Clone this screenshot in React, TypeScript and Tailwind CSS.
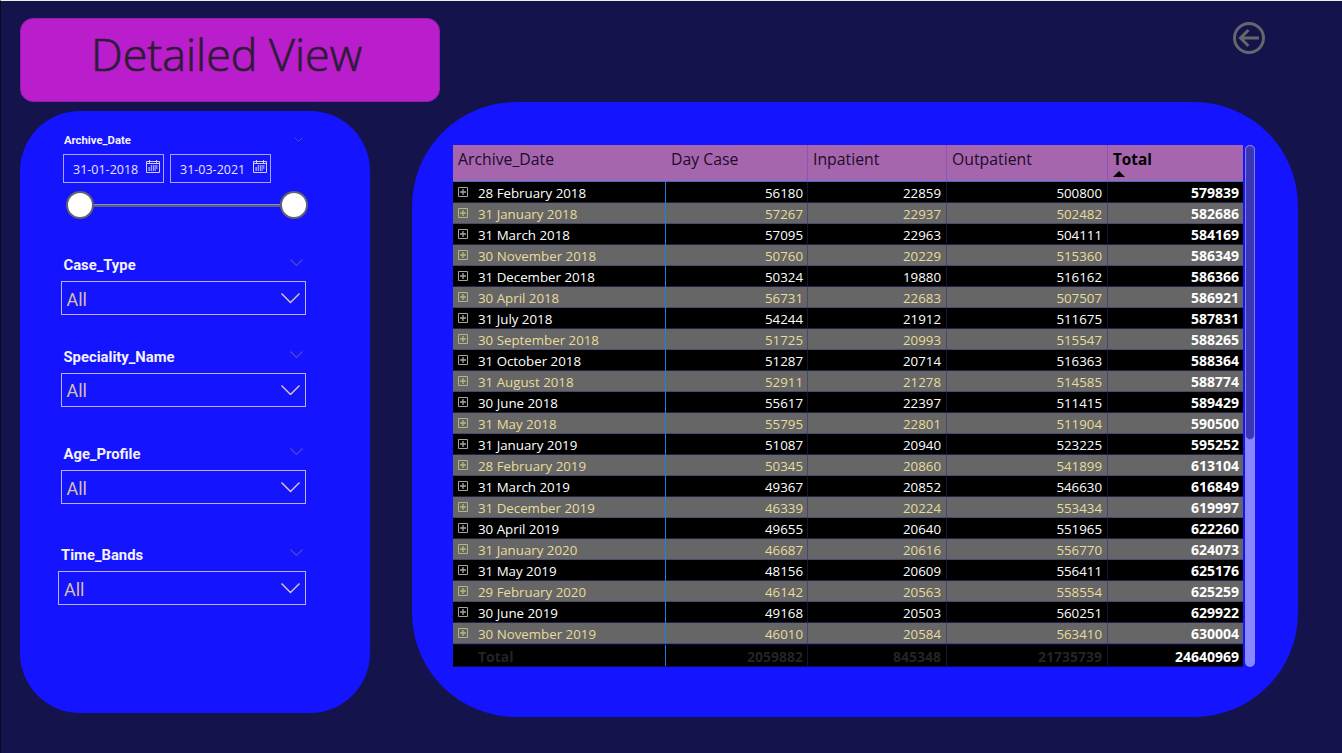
import React from "react";

type Row = [string, string, string, string, string];

const rows: Row[] = [
  ["28 February 2018", "56180", "22859", "500800", "579839"],
  ["31 January 2018", "57267", "22937", "502482", "582686"],
  ["31 March 2018", "57095", "22963", "504111", "584169"],
  ["30 November 2018", "50760", "20229", "515360", "586349"],
  ["31 December 2018", "50324", "19880", "516162", "586366"],
  ["30 April 2018", "56731", "22683", "507507", "586921"],
  ["31 July 2018", "54244", "21912", "511675", "587831"],
  ["30 September 2018", "51725", "20993", "515547", "588265"],
  ["31 October 2018", "51287", "20714", "516363", "588364"],
  ["31 August 2018", "52911", "21278", "514585", "588774"],
  ["30 June 2018", "55617", "22397", "511415", "589429"],
  ["31 May 2018", "55795", "22801", "511904", "590500"],
  ["31 January 2019", "51087", "20940", "523225", "595252"],
  ["28 February 2019", "50345", "20860", "541899", "613104"],
  ["31 March 2019", "49367", "20852", "546630", "616849"],
  ["31 December 2019", "46339", "20224", "553434", "619997"],
  ["30 April 2019", "49655", "20640", "551965", "622260"],
  ["31 January 2020", "46687", "20616", "556770", "624073"],
  ["31 May 2019", "48156", "20609", "556411", "625176"],
  ["29 February 2020", "46142", "20563", "558554", "625259"],
  ["30 June 2019", "49168", "20503", "560251", "629922"],
  ["30 November 2019", "46010", "20584", "563410", "630004"],
];

const columns = "grid grid-cols-[213px_142px_139px_161px_135px]";

function Chevron({ className, size, stroke }: { className: string; size: number; stroke: number }) {
  return (
    <svg className={className} width={size} height={size / 2 + 1} viewBox={`0 0 ${size} ${size / 2 + 1}`} fill="none" stroke="currentColor" strokeWidth={stroke}>
      <path d={`M0.5 0.5 L${size / 2} ${size / 2} L${size - 0.5} 0.5`} />
    </svg>
  );
}

function CalendarIcon() {
  return (
    <svg width="14" height="13" viewBox="0 0 14 13" fill="none" stroke="#d4d0ef" strokeWidth="1" className="mt-[5px] shrink-0">
      <path d="M0.5 1.5H13.5V12.5H0.5Z M0.5 3.5H13.5 M3.5 0V3 M10.5 0V3" />
      <path d="M4.7 6H12 M2.4 8H12 M2.4 10H10" strokeWidth="1.5" strokeDasharray="1.5 0.8" />
    </svg>
  );
}

function DateBox({ value }: { value: string }) {
  return (
    <div className="flex h-[29px] w-[101px] border border-[#a9a4f8] pl-[9px]">
      <span className="w-[68px] whitespace-nowrap font-['Open_Sans',sans-serif] text-[12.5px] leading-[29px] text-[#e6e3fa]">{value}</span>
      <span className="ml-[5px]"><CalendarIcon /></span>
    </div>
  );
}

function Slicer({ label, className }: { label: string; className: string }) {
  return (
    <section className={className}>
      <div className="flex h-[26px] items-start justify-between pl-[3px] pr-[3px]">
        <h2 className="whitespace-nowrap font-['Roboto',sans-serif] text-[14.8px] font-bold leading-[20px] text-[#f4f2ff]">{label}</h2>
        <Chevron className="mt-[4px] text-[#4c4bc0]" size={13} stroke={1.2} />
      </div>
      <div className="flex h-[34px] items-center justify-between border border-[#b9b3f2] pl-[5px] pr-[5px]">
        <span className="mt-[3px] font-['Roboto',sans-serif] text-[18px] leading-none text-[#d6bfa9]">All</span>
        <Chevron className="mt-[1px] text-[#e0ccc0]" size={19} stroke={1.4} />
      </div>
    </section>
  );
}

function ExpandIcon() {
  return (
    <svg width="10" height="10" viewBox="0 0 10 10" fill="none" stroke="currentColor" className="-mt-[2px] ml-[5px] mr-[10px] opacity-65">
      <path d="M0.5 0.5H9.5V9.5H0.5Z" />
      <path d="M2 5H8 M5 2V8" strokeWidth="1.3" />
    </svg>
  );
}

export default function App() {
  return (
    <div className="flex h-[753px] w-[1342px] flex-col overflow-hidden border-l border-t border-l-[#080820] border-t-[#e8f0ee] bg-[#14134b] font-['Open_Sans',sans-serif]">
      <header className="flex h-[100px] shrink-0 items-start justify-between pl-[19px] pr-[76px] pt-[17px]">
        <div className="h-[83.5px] w-[420px] rounded-[13px] border border-[#8c1fae] bg-[#ba1dcb]">
          <h1 className="ml-[70px] whitespace-nowrap pt-[5px] text-[44.8px] font-light leading-[60px] text-[#2c1c36] [-webkit-text-stroke:0.7px_#2c1c36]">Detailed View</h1>
        </div>
        <svg width="34" height="34" viewBox="0 0 34 34" fill="none" stroke="#66666b" strokeWidth="3" className="mt-[3px]">
          <circle cx="17" cy="17" r="14.5" />
          <path d="M27 17H9 M16.5 9L8.5 17L16.5 25" />
        </svg>
      </header>

      <main className="flex items-start pl-[19px]">
        <aside className="mt-[10px] h-[602px] w-[349.5px] shrink-0 rounded-[60px] bg-[#1414ff] pt-[20px]">
          <section className="ml-[43px] w-[245px]">
            <div className="flex h-[23px] items-start justify-between pl-[1px] pr-[5px]">
              <h2 className="font-['Roboto',sans-serif] text-[11.3px] font-bold leading-[19px] text-[#f4f2ff]">Archive_Date</h2>
              <Chevron className="mt-[6px] text-[#4c4bc0]" size={9} stroke={1} />
            </div>
            <div className="flex gap-[6px]">
              <DateBox value="31-01-2018" />
              <DateBox value="31-03-2021" />
            </div>
            <div className="ml-[3px] mt-[8px] flex h-[28px] w-[242px] items-center">
              <span className="h-[28px] w-[28px] shrink-0 rounded-full border-2 border-[#62626e] bg-white" />
              <span className="h-[3px] flex-1 border-t border-[#8c8cb4] bg-[#5c5c80]" />
              <span className="h-[28px] w-[28px] shrink-0 rounded-full border-2 border-[#62626e] bg-white" />
            </div>
          </section>

          <Slicer label="Case_Type" className="ml-[40.5px] mt-[36px] w-[245px]" />
          <Slicer label="Speciality_Name" className="ml-[40.5px] mt-[31.5px] w-[245px]" />
          <Slicer label="Age_Profile" className="ml-[40.5px] mt-[37.5px] w-[245px]" />
          <Slicer label="Time_Bands" className="ml-[38px] mt-[41px] w-[247.5px]" />
        </aside>

        <section className="ml-[42.5px] mt-[0.5px] flex h-[615px] w-[886px] shrink-0 items-start rounded-[104px] bg-[#1414ff] pl-[41px] pt-[43.5px]">
          <div className="w-[790px] shrink-0">
            <div className={`${columns} h-[37px] border-b border-[#3a72c8] bg-[#a666ae] text-[15.8px] leading-[21px] text-[#220a2a]`}>
              <div className="pl-[5px] pt-[4px]">Archive_Date</div>
              <div className="border-r border-[#9153b8] pl-[5px] pt-[4px]">Day Case</div>
              <div className="border-r border-[#9153b8] pl-[5px] pt-[4px]">Inpatient</div>
              <div className="border-r border-[#9153b8] pl-[5px] pt-[4px]">Outpatient</div>
              <div className="pl-[5px] pt-[4px] text-[15.3px] font-bold text-black">
                Total
                <svg width="12" height="6" viewBox="0 0 12 6" className="mt-[1px] block"><path d="M0 6L6 0L12 6Z" fill="#000" /></svg>
              </div>
            </div>
            {rows.map((r, i) => (
              <div key={r[0]} className={`${columns} h-[21px] border-b text-[13.3px] leading-[22px] ${i % 2 ? "border-[#4a4a6c] bg-[#666666] text-[#e6dc9c]" : "border-[#23234a] bg-black text-white"}`}>
                <div className="flex h-[21px] items-center whitespace-nowrap border-r border-r-[#1f7fe0]">
                  <ExpandIcon />
                  <span className="h-[21px]">{r[0]}</span>
                </div>
                <div className="h-[21px] border-r border-r-[#2c2870]/50 pr-[4px] text-right">{r[1]}</div>
                <div className="h-[21px] border-r border-r-[#2c2870]/50 pr-[5px] text-right">{r[2]}</div>
                <div className="h-[21px] border-r border-r-[#2c2870]/50 pr-[5px] text-right">{r[3]}</div>
                <div className="pr-[4px] text-right text-[14px] font-bold text-white">{r[4]}</div>
              </div>
            ))}
            <div className={`${columns} h-[23px] border-y border-b-[#0a0a60] border-t-[#0a0a40] bg-black text-[14px] font-bold leading-[24px] text-[#242424]`}>
              <div className="h-[21px] border-r border-r-[#1f7fe0] pl-[25px]">Total</div>
              <div className="h-[21px] border-r border-r-[#15153a] pr-[4px] text-right">2059882</div>
              <div className="h-[21px] border-r border-r-[#15153a] pr-[5px] text-right">845348</div>
              <div className="h-[21px] border-r border-r-[#15153a] pr-[5px] text-right">21735739</div>
              <div className="h-[21px] pr-[4px] text-right text-white">24640969</div>
            </div>
          </div>
          <div className="ml-[2px] h-[522px] w-[10px] shrink-0 rounded-full bg-[#8a86ff]">
            <div className="h-[295px] rounded-full border border-[#7f7cf4] bg-[#3a36b4]" />
          </div>
        </section>
      </main>
    </div>
  );
}
